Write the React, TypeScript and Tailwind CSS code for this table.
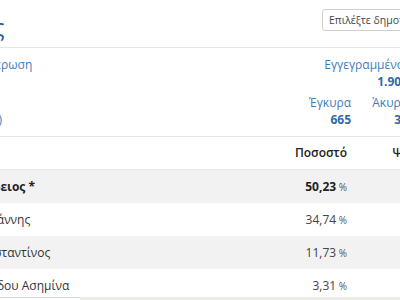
import React from "react";

const rows = [
  { name: "Καρλής Ευσέβειος *", pct: "50,23", bold: true },
  { name: "Μανολάκης Ιωάννης", pct: "34,74", bold: false },
  { name: "Τσακίρης Κωνσταντίνος", pct: "11,73", bold: false },
  { name: "Χατζηθεοδωρίδου Ασημίνα", pct: "3,31", bold: false },
];

export default function App() {
  return (
    <div
      className="relative w-[400px] h-[300px] overflow-hidden bg-white text-[12px] text-[#333]"
      style={{ fontFamily: '"Open Sans", "Liberation Sans", sans-serif' }}
    >
      <div className="-ml-[84px] w-[560px]">
        {/* header */}
        <div className="flex items-start justify-between h-[48px] border-b border-[#e6e6e6]">
          <h1 className="mt-[13px] text-[24px] leading-[28px] font-normal text-[#2c5f91]">Εκλογές</h1>
          <div className="mt-[9px] w-[154px] h-[22px] border border-[#cfcfcf] rounded-[3px] pl-[6px] text-[10.5px] leading-[20px] text-[#444] whitespace-nowrap overflow-hidden">
            Επιλέξτε δημοτική ενότητα
          </div>
        </div>

        {/* stats */}
        <div className="flex flex-col gap-[4px] py-[8px] border-b border-[#e6e6e6] leading-[17px] whitespace-nowrap">
          <div className="flex items-start justify-between">
            <div className="flex flex-col -ml-[7px] text-[#3d7dbd]">
              <span>Τελευταία ενημέρωση</span>
              <span className="font-semibold text-[#2d6aa7]">21:40</span>
            </div>
            <div className="flex gap-[20px]">
              <div className="flex flex-col items-end">
                <span className="text-[#3d7dbd]">Εγγεγραμμένοι</span>
                <span className="font-bold text-[#2d6aa7]">1.903</span>
              </div>
              <div className="flex flex-col items-end w-[48px]">
                <span className="text-[#3d7dbd]">Ψήφισαν</span>
                <span className="font-bold text-[#2d6aa7]">695</span>
              </div>
            </div>
          </div>
          <div className="flex items-start justify-between">
            <div className="flex flex-col -ml-[7px] text-[#3d7dbd]">
              <span>Τμήματα</span>
              <span>3 από 3 (100,0%)</span>
            </div>
            <div className="flex gap-[23px]">
              <div className="flex flex-col items-end">
                <span className="text-[#3d7dbd]">Έγκυρα</span>
                <span className="font-bold text-[#2d6aa7]">665</span>
              </div>
              <div className="flex flex-col items-end w-[34px]">
                <span className="text-[#3d7dbd]">Άκυρα</span>
                <span className="font-bold text-[#2d6aa7]">30</span>
              </div>
              <div className="flex flex-col items-end w-[45px]">
                <span className="text-[#3d7dbd]">Λευκά</span>
                <span className="font-bold text-[#2d6aa7]">0</span>
              </div>
            </div>
          </div>
        </div>

        {/* table header */}
        <div className="flex items-center h-[33px] pr-[45px] border-b border-[#e6e6e6] font-semibold text-[#222]">
          <div className="flex-1">Υποψήφιος</div>
          <div className="w-[100px] text-right">Ποσοστό</div>
          <div className="w-[84px] text-right">Ψήφοι</div>
        </div>

        {rows.map((r, i) => (
          <div
            key={i}
            className={`flex items-center h-[33px] pr-[45px] whitespace-nowrap ${i % 2 === 0 ? "bg-[#f2f2f2]" : "bg-white"}`}
          >
            <div className={`flex-1 ${r.bold ? "font-bold text-[#222]" : ""}`}>{r.name}</div>
            <div className="w-[100px] text-right">
              <span className={r.bold ? "font-bold text-[#222]" : "text-[#444]"}>{r.pct}</span>
              <span className="text-[10px] text-[#555]"> %</span>
            </div>
            <div className="w-[84px] text-right">334</div>
          </div>
        ))}
      </div>

      {/* horizontal scrollbar */}
      <div className="absolute left-0 right-0 bottom-0 h-[3px] flex bg-[#ecece8]">
        <div className="w-[80px] bg-white border-t border-[#d6d6d6]"></div>
      </div>
    </div>
  );
}
